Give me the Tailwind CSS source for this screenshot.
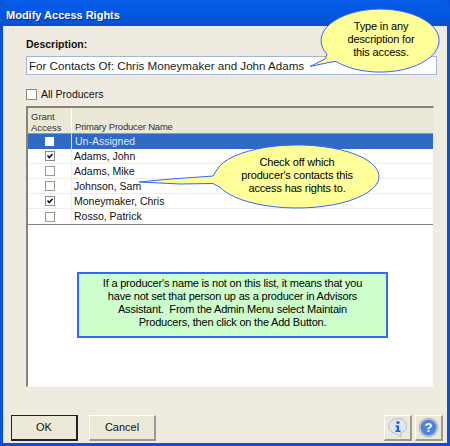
<!DOCTYPE html>
<html><head><meta charset="utf-8"><script src="https://cdn.jsdelivr.net/npm/@tailwindcss/browser@4"></script></head>
<body class="m-0 bg-[#0a4fd8]">
<div class="relative w-[450px] h-[446px] overflow-hidden flex flex-col font-['Liberation_Sans',sans-serif] text-[10.5px] text-[#111]">
  <div class="h-[26px] shrink-0 rounded-t-[7px] bg-gradient-to-b from-[#0a5ce8] via-[#0258e0] to-[#0a50d0] pl-[6px] pt-[8px] text-[11px] leading-[14px] font-bold text-white [text-shadow:1px_1px_0_#0a2f90]">Modify Access Rights</div>
  <div class="flex-1 flex flex-col ml-[3px] mr-[3px] mb-[3px] bg-[#efebe0] pl-[23px] pr-[13px]">
    <div class="pt-[11px] h-[30px] shrink-0 font-bold text-[10.5px] leading-[14px]">Description:</div>
    <div class="h-[19px] w-[411px] shrink-0 border border-[#a3b5d6] bg-white pl-[2px] text-[11.6px] leading-[18px] text-[#222]">For Contacts Of: Chris Moneymaker and John Adams</div>
    <div class="mt-[14px] h-[17px] flex items-start gap-[4px] shrink-0">
      <span class="w-[11px] h-[11px] border border-[#8a8a80] bg-white"></span><span class="text-[10.5px] leading-[11px]">All Producers</span>
    </div>
    <div class="w-[408px] h-[281px] shrink-0 border-t-2 border-l-2 border-[#85837a] border-r border-b border-r-[#efe9dc] border-b-[#f7f5ee] bg-white flex flex-col">
      <div class="h-[26px] shrink-0 flex bg-[#ebe8d8] border-b border-[#9c9a90] text-[9.5px] leading-[11px] text-[#333]">
        <div class="w-[44px] border-r border-white pl-[3px] pt-[3px]">Grant<br>Access</div>
        <div class="flex-1 pl-[3px] pt-[13px] tracking-[-0.2px]">Primary Producer Name</div>
      </div>
      <div class="h-[15px] flex bg-[#316ac5] text-white leading-[15px]">
        <div class="w-[44px] border-r border-[#efebe0] flex justify-center items-center"><span class="w-[9px] h-[9px] bg-white"></span></div><div class="pl-[3px] text-[#dbe6ff]">Un-Assigned</div>
      </div>
      <div class="h-[15px] flex border-b border-[#f0ede2] leading-[15px]">
        <div class="w-[44px] border-r border-[#efebe0] flex justify-center items-center"><svg width="10" height="10" viewBox="0 0 10 10"><rect x=".5" y=".5" width="9" height="9" fill="#fff" stroke="#8b8b85"/><path d="M2.500 4.500 4.200 6.500 7.500 3" fill="none" stroke="#111" stroke-width="1.600"/></svg></div><div class="pl-[2px]">Adams, John</div>
      </div>
      <div class="h-[15px] flex border-b border-[#f0ede2] leading-[15px]">
        <div class="w-[44px] border-r border-[#efebe0] flex justify-center items-center"><span class="w-[10px] h-[10px] border border-[#9a9a94]"></span></div><div class="pl-[2px]">Adams, Mike</div>
      </div>
      <div class="h-[15px] flex border-b border-[#f0ede2] leading-[15px]">
        <div class="w-[44px] border-r border-[#efebe0] flex justify-center items-center"><span class="w-[10px] h-[10px] border border-[#9a9a94]"></span></div><div class="pl-[2px]">Johnson, Sam</div>
      </div>
      <div class="h-[15px] flex border-b border-[#f0ede2] leading-[15px]">
        <div class="w-[44px] border-r border-[#efebe0] flex justify-center items-center"><svg width="10" height="10" viewBox="0 0 10 10"><rect x=".5" y=".5" width="9" height="9" fill="#fff" stroke="#8b8b85"/><path d="M2.500 4.500 4.200 6.500 7.500 3" fill="none" stroke="#111" stroke-width="1.600"/></svg></div><div class="pl-[2px]">Moneymaker, Chris</div>
      </div>
      <div class="h-[15px] flex leading-[15px]">
        <div class="w-[44px] border-r border-[#efebe0] flex justify-center items-center"><span class="w-[10px] h-[10px] border border-[#9a9a94]"></span></div><div class="pl-[2px]">Rosso, Patrick</div>
      </div>
      <div class="h-[1px] bg-[#85837a]"></div>
    </div>
    <div class="flex mt-[28px] -ml-[15px] -mr-[9px] items-start">
      <div class="w-[67px] h-[26px] border border-[#222] border-b-2 border-r-2 bg-[#ece9d8] flex items-center justify-center text-[11px]">OK</div>
      <div class="ml-[11px] w-[67px] h-[26px] border border-white border-b-2 border-r-2 border-b-[#9c9a90] border-r-[#9c9a90] bg-[#ece9d8] flex items-center justify-center text-[11px]">Cancel</div>
      <div class="ml-auto flex gap-[3px]">
        <div class="w-[28px] h-[26px] border border-white border-b-2 border-r-2 border-b-[#9c9a90] border-r-[#9c9a90] bg-[#ece9d8] flex items-center justify-center">
          <svg width="22" height="22" viewBox="0 0 22 22"><path d="M11 1.500C5.500 1.500 2 5 2 9.500c0 4 3 6.500 7 7 1.500 1.500 3 3 5.500 3.500-1-1-1.500-2.500-1-4 3.500-1 6-3.500 6-6.500 0-4.500-3-8-8.500-8z" fill="#dfe8f0" stroke="#b5c0c8"/><circle cx="11" cy="5.500" r="1.600" fill="#1a5fd0"/><path d="M8.500 8.500h3.500v5h1.500v1.500h-5v-1.500h1.300v-3.500h-1.300z" fill="#1a5fd0"/></svg>
        </div>
        <div class="w-[28px] h-[26px] border border-white border-b-2 border-r-2 border-b-[#9c9a90] border-r-[#9c9a90] bg-[#ece9d8] flex items-center justify-center">
          <svg width="21" height="21" viewBox="0 0 21 21"><circle cx="10.500" cy="10.500" r="10" fill="#b8c0c8"/><circle cx="10.500" cy="10.500" r="7.800" fill="#4a84e0"/><text x="10.500" y="15" text-anchor="middle" font-size="13" font-weight="bold" fill="#fff" font-family="Liberation Sans">?</text></svg>
        </div>
      </div>
    </div>
  </div>
  <svg class="absolute left-0 top-0" width="450" height="446" viewBox="0 0 450 446">
    <path d="M310 66.500 L325 59 L327 54.300 A59 31.500 0 1 1 336 61.500 L331 62 Z" fill="#ffff99" stroke="#3366ff" stroke-width="1"/>
    <path d="M139 182 L165 179.500 L213 176 L217 169.600 A82 31.500 0 1 1 220 187.300 L213 183.500 L180 184 Z" fill="#ffff99" stroke="#3366ff" stroke-width="1"/>
  </svg>
  <div class="absolute left-[322px] top-[20px] w-[118px] text-center text-[11px] leading-[13px] tracking-[-0.15px] text-black">Type in any<br>description for<br>this access.</div>
  <div class="absolute left-[215px] top-[156px] w-[164px] text-center text-[11px] leading-[13px] tracking-[-0.15px] text-black">Check off which<br>producer's contacts this<br>access has rights to.</div>
  <div class="absolute left-[77px] top-[272px] w-[311px] h-[66px] border-2 border-[#3366ff] bg-[#ccffcc] text-center text-[11px] leading-[13px] tracking-[-0.2px] text-black pt-[3px]">If a producer's name is not on this list, it means that you<br>have not set that person up as a producer in Advisors<br>Assistant.&nbsp; From the Admin Menu select Maintain<br>Producers, then click on the Add Button.</div>
</div>
</body></html>
